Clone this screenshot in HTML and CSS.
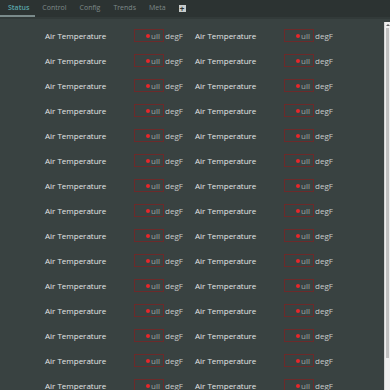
FILE: index.html
```html
<!DOCTYPE html>
<html lang="en">
<head>
    <meta charset="UTF-8">
    <title>Status</title>
    <link rel="stylesheet" href="styles.css">
</head>
<body>
    <div class="tab-bar">
        <a href="#" class="tab active">Status</a>
        <a href="#" class="tab">Control</a>
        <a href="#" class="tab">Config</a>
        <a href="#" class="tab">Trends</a>
        <a href="#" class="tab">Meta</a>
        <span class="tab-add">+</span>
    </div>

    <div class="main">
        <div class="content" id="content"></div>
        <div class="scrollbar">
            <div class="scroll-arrow"></div>
            <div class="scroll-thumb"></div>
        </div>
    </div>

    <script>
        const content = document.getElementById('content');
        for (let i = 0; i < 30; i++) {
            const cell = document.createElement('div');
            cell.className = 'cell';
            cell.innerHTML =
                '<span class="label">Air Temperature</span>' +
                '<span class="value"><span class="dot"></span>ull</span>' +
                '<span class="unit">degF</span>';
            content.appendChild(cell);
        }
    </script>
</body>
</html>
```

FILE: styles.css
```css
body {
    margin: 0;
    height: 390px;
    overflow: hidden;
    font-family: "Open Sans", "Noto Sans", sans-serif;
    font-size: 8px;
    background-color: #394241;
    color: #e4e6e6;
}

.tab-bar {
    display: flex;
    align-items: center;
    height: 17px;
    background-color: #2c3332;
    border-bottom: 2px solid #323a39;
    padding-left: 2px;
}

.tab {
    position: relative;
    height: 17px;
    line-height: 16px;
    padding: 0 6px;
    margin-right: 1px;
    font-size: 7px;
    color: #7f8a89;
    text-decoration: none;
}

.tab.active {
    color: #5aa5a8;
    font-weight: 600;
}

.tab.active::after {
    content: "";
    position: absolute;
    left: -2px;
    right: 0;
    bottom: 0;
    height: 2px;
    background-color: #7a8a8a;
}

.tab-add {
    width: 7px;
    height: 7px;
    margin-left: 6px;
    background-color: #c8cccc;
    color: #2c3332;
    font-size: 8px;
    font-weight: bold;
    line-height: 7px;
    text-align: center;
}

.main {
    display: flex;
    height: 371px;
}

.content {
    flex: 1;
    display: grid;
    grid-template-columns: 150px 150px;
    grid-auto-rows: 25px;
    align-content: start;
    padding: 4px 0 0 45px;
    overflow: hidden;
}

.cell {
    display: flex;
    align-items: center;
}

.label {
    width: 89px;
}

.value {
    display: flex;
    align-items: center;
    justify-content: flex-end;
    width: 25px;
    height: 11px;
    padding-right: 3px;
    border: 1px solid #6c2a2a;
    color: #9ea8a7;
}

.dot {
    width: 4px;
    height: 4px;
    margin-right: 1px;
    border-radius: 50%;
    background-color: #e8262a;
}

.unit {
    margin-left: 1px;
    color: #c9cccc;
}

.scrollbar {
    width: 5px;
    margin-top: 3px;
    background-color: #f0f0f0;
    border-left: 1px solid #d8d8d8;
    padding: 1px 0 0 0;
}

.scroll-arrow {
    width: 0;
    height: 0;
    margin: 1px auto 2px;
    border-left: 2px solid transparent;
    border-right: 2px solid transparent;
    border-bottom: 2px solid #606060;
}

.scroll-thumb {
    width: 3px;
    height: 330px;
    margin: 0 auto;
    background-color: #c1c1c1;
}
```
